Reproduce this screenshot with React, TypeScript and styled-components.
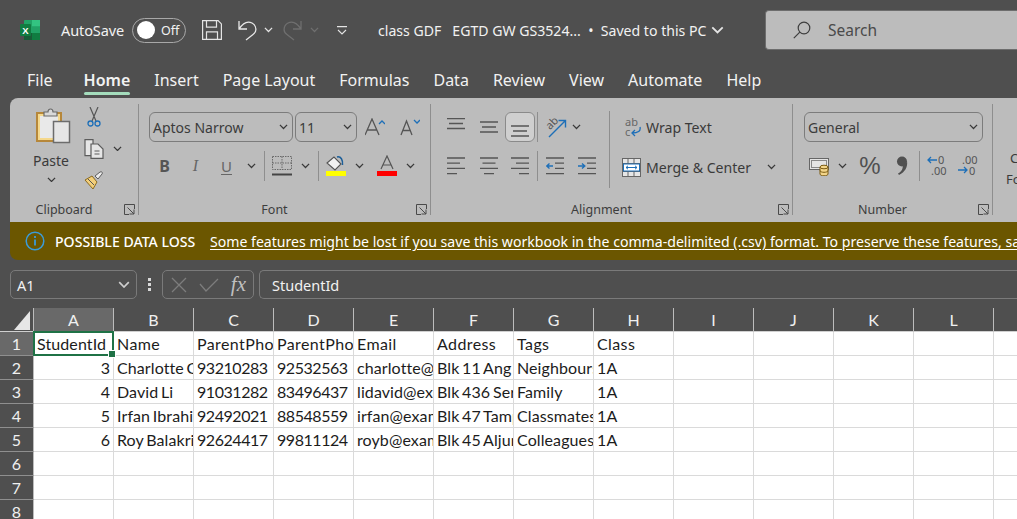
import styled, { createGlobalStyle } from "styled-components";

const UI_FONT = `"Noto Sans", "Open Sans", sans-serif`;
const CELL_FONT = `"Lato", "Noto Sans", sans-serif`;

const GlobalStyle = createGlobalStyle`
  html, body {
    margin: 0;
    width: 1017px;
    height: 519px;
    overflow: hidden;
    background: #4f4f4f;
    font-family: ${UI_FONT};
  }
  * { box-sizing: border-box; }
  svg { flex-shrink: 0; }
`;

const Page = styled.div`
  width: 1017px;
  height: 519px;
  overflow: hidden;
  background: #4f4f4f;
  color: #f2f2f2;
`;

/* title bar */
const TitleBar = styled.div`
  display: flex;
  align-items: center;
  height: 62px;
  padding: 0 0 2px 20px;
  font-size: 14px;
`;

const Spot = styled.div<{ $w: number }>`
  width: ${(p) => p.$w}px;
  flex: none;
  display: flex;
  align-items: center;
  justify-content: center;
`;

const AutoSave = styled.span`
  margin-left: 21px;
  width: 71px;
  flex: none;
  font-size: 14.5px;
  letter-spacing: -0.1px;
`;

const Toggle = styled.div`
  width: 54px;
  height: 25px;
  flex: none;
  border: 1px solid #a8a8a8;
  border-radius: 13px;
  display: flex;
  align-items: center;
  padding-left: 4px;
  gap: 6px;
  font-size: 12.5px;
`;

const Knob = styled.span`
  width: 18px;
  height: 18px;
  border-radius: 50%;
  background: #fff;
`;

const DocTitle = styled.div`
  margin-left: 31px;
  width: 387px;
  flex: none;
  display: flex;
  align-items: center;
  gap: 5px;
  font-size: 14.1px;
  white-space: pre;
`;

const SearchBox = styled.div`
  flex: 1;
  height: 40px;
  background: #bcbcbc;
  border: 1px solid #6d6d6d;
  border-right: none;
  border-radius: 4px 0 0 4px;
  display: flex;
  align-items: center;
  padding-left: 27px;
  gap: 17px;
  color: #4a4a4a;
  font-size: 15.5px;
`;

/* tabs */
const TabRow = styled.nav`
  display: flex;
  height: 36px;
  padding-left: 27px;
  gap: 24px;
  font-size: 16px;
`;

const Tab = styled.div<{ $active?: boolean; $first?: boolean }>`
  position: relative;
  padding-top: 6px;
  line-height: 24px;
  margin-right: ${(p) => (p.$first ? 7 : 0)}px;
  font-weight: ${(p) => (p.$active ? 600 : 400)};
  ${(p) =>
    p.$active &&
    `&::after {
      content: "";
      position: absolute;
      left: 0;
      right: 0;
      top: 30px;
      height: 3px;
      border-radius: 2px;
      background: #a4dcbc;
    }`}
`;

/* ribbon */
const Ribbon = styled.div`
  margin-left: 10px;
  height: 124px;
  display: flex;
  overflow: hidden;
  background: #bcbcbc;
  border-radius: 8px 0 0 0;
  color: #3a3a3a;
  font-size: 13px;
`;

const Group = styled.section<{ $w: number; $pad: number }>`
  --pad: ${(p) => p.$pad}px;
  width: ${(p) => p.$w}px;
  flex: none;
  height: 111px;
  margin-top: 6px;
  padding: 8px 0 0 var(--pad);
  border-right: 1px solid #8e8e8e;
  display: flex;
  flex-direction: column;
`;

const GroupBody = styled.div`
  display: flex;
  height: 70px;
`;

const GroupFooter = styled.div`
  position: relative;
  margin-top: auto;
  margin-left: calc(var(--pad) * -1);
  height: 12px;
  padding-right: 20px;
  display: flex;
  align-items: center;
  justify-content: center;
  font-size: 12.5px;
  color: #3d3d3d;
  & > svg {
    position: absolute;
    right: 3px;
    top: 1px;
  }
`;

const Rows = styled.div`
  display: flex;
  flex-direction: column;
  gap: 8px;
`;

const ToolRow = styled.div<{ $h?: number }>`
  display: flex;
  align-items: center;
  height: ${(p) => p.$h ?? 30}px;
`;

const Tool = styled.div<{ $w: number; $on?: boolean }>`
  width: ${(p) => p.$w}px;
  height: 30px;
  flex: none;
  display: flex;
  align-items: center;
  justify-content: center;
  ${(p) =>
    p.$on &&
    `background: #cfcfcf; border: 1px solid #8a8a8a; border-radius: 6px;`}
`;

const Bar = styled.span`
  width: 1px;
  height: 30px;
  background: #8e8e8e;
`;

const Combo = styled.div<{ $w: number }>`
  width: ${(p) => p.$w}px;
  height: 30px;
  flex: none;
  border: 1px solid #7c7c7c;
  border-radius: 6px;
  display: flex;
  align-items: center;
  justify-content: space-between;
  padding: 0 4px 0 3px;
  font-size: 14px;
  color: #3b3b3b;
`;

const BoldLetter = styled.strong`
  color: #555;
  font-size: 16px;
`;

const ItalicLetter = styled.em`
  color: #666;
  font-size: 16px;
  font-family: "Liberation Serif", serif;
`;

const UnderLetter = styled.span`
  color: #666;
  font-size: 15px;
  text-decoration: underline;
  text-underline-offset: 2px;
`;

const PasteCol = styled.div`
  width: 62px;
  display: flex;
  flex-direction: column;
  align-items: center;
  margin-top: -4px;
  font-size: 14px;
  line-height: 18px;
  & > svg:first-child {
    margin-left: 5px;
  }
  & > span {
    margin-top: 6px;
  }
  & > svg:last-child {
    margin-top: 7px;
  }
`;

const ToolCol = styled.div`
  margin-top: -8px;
  display: flex;
  flex-direction: column;
  gap: 7px;
`;

const WideBlock = styled.div`
  width: 170px;
  flex: none;
  height: 77px;
  margin-top: -1px;
  padding-top: 1px;
  border-right: 1px solid #8e8e8e;
`;

const WrapCol = styled.div`
  display: flex;
  flex-direction: column;
  gap: 10px;
  padding-left: 12px;
`;

const WrapRow = styled.div`
  display: flex;
  align-items: center;
  height: 30px;
  gap: 5px;
  font-size: 14.1px;
  white-space: nowrap;
`;

const WrapLabel = styled.span`
  width: 106px;
`;

const CutOff = styled.div<{ $indent: number }>`
  padding-left: ${(p) => p.$indent}px;
  line-height: 21px;
  font-size: 13px;
  white-space: nowrap;
`;

const LastGroup = styled.section`
  flex: none;
  width: 90px;
  padding-top: 50px;
`;

/* message bar */
const MessageBar = styled.div`
  margin-left: 10px;
  height: 38px;
  display: flex;
  align-items: center;
  padding-left: 15px;
  overflow: hidden;
  white-space: nowrap;
  background: #6b5600;
  border-radius: 0 0 0 8px;
  color: #fff;
  font-size: 14.1px;
`;

const MessageTitle = styled.strong`
  margin-left: 10px;
  width: 155px;
  flex: none;
  font-weight: 500;
`;

const MessageLink = styled.span`
  text-decoration: underline;
  text-underline-offset: 2px;
`;

/* formula bar */
const FormulaBar = styled.div`
  display: flex;
  align-items: center;
  height: 29px;
  margin: 10px 0 9px 10px;
  font-size: 14.5px;
`;

const FrameBox = styled.div<{ $w?: number }>`
  height: 29px;
  ${(p) => (p.$w ? `width: ${p.$w}px; flex: none;` : "flex: 1;")}
  border: 1px solid #7a7a7a;
  display: flex;
  align-items: center;
  border-radius: 5px;
`;

const NameBox = styled(FrameBox)`
  justify-content: space-between;
  padding: 0 6px;
`;

const FormulaInput = styled(FrameBox)`
  margin-left: 5px;
  padding-left: 12px;
  border-right: none;
  border-radius: 5px 0 0 5px;
`;

const Dots = styled.div`
  width: 25px;
  flex: none;
  display: flex;
  flex-direction: column;
  align-items: center;
  gap: 2px;
  & > i {
    width: 3px;
    height: 3px;
    background: #d8d8d8;
  }
`;

const FxButtons = styled(FrameBox)`
  justify-content: space-between;
  padding: 0 7px 0 8px;
`;

const FxLabel = styled.i`
  font-family: "Liberation Serif", serif;
  font-size: 21px;
  color: #c0c0c0;
`;

/* sheet */
const Sheet = styled.div`
  display: grid;
  grid-template-columns: 34px repeat(13, 80px);
  grid-auto-rows: 24px;
  font-family: ${CELL_FONT};
  font-size: 16px;
  background: #fff;
`;

const Corner = styled.div`
  background: #4f4f4f;
  border-right: 1px solid #bcbcbc;
  border-bottom: 1px solid #d0d0d0;
  display: flex;
  align-items: flex-end;
  justify-content: flex-end;
  padding: 0 3px 1px 0;
`;

const ColHead = styled.div<{ $sel?: boolean }>`
  background: ${(p) => (p.$sel ? "#696969" : "#4f4f4f")};
  color: #f0f0f0;
  border-right: 1px solid #bcbcbc;
  border-bottom: 1px solid #d0d0d0;
  display: flex;
  align-items: center;
  justify-content: center;
`;

const RowHead = styled.div<{ $sel?: boolean }>`
  background: ${(p) => (p.$sel ? "#696969" : "#4f4f4f")};
  color: #f0f0f0;
  border-right: 1px solid #bcbcbc;
  border-bottom: 1px solid #8f8f8f;
  display: flex;
  align-items: center;
  justify-content: center;
`;

const Cell = styled.div<{ $right?: boolean; $spacing: number; $active?: boolean }>`
  position: relative;
  background: #fff;
  color: #1c1c1c;
  border-right: 1px solid #dadada;
  border-bottom: 1px solid #dadada;
  padding: 0 ${(p) => (p.$right ? 3 : 0)}px 0 3px;
  line-height: 24px;
  white-space: nowrap;
  overflow: ${(p) => (p.$active ? "visible" : "hidden")};
  text-align: ${(p) => (p.$right ? "right" : "left")};
  letter-spacing: ${(p) => p.$spacing}px;
  word-spacing: -1.5px;
  ${(p) =>
    p.$active &&
    `z-index: 2;
    &::after {
      content: "";
      position: absolute;
      inset: -1px;
      border: 2px solid #1f7246;
      pointer-events: none;
    }
    &::before {
      content: "";
      position: absolute;
      right: -3px;
      bottom: -3px;
      width: 6px;
      height: 6px;
      background: #1f7246;
      border: 1px solid #fff;
      z-index: 1;
    }`}
`;

/* icons */
const Chevron = ({ size = 9, color = "#3a3a3a" }: { size?: number; color?: string }) => (
  <svg width={size} height={size * 0.6} viewBox="0 0 10 6" fill="none" stroke={color} strokeWidth="1.4">
    <path d="M1 1l4 4 4-4" />
  </svg>
);

const Launcher = () => (
  <svg width="11" height="11" viewBox="0 0 11 11" fill="none" stroke="#4a4a4a" strokeWidth="1">
    <path d="M10.5 5V.5H.5v10H5M3.5 3.5l6.5 6.5M10 5.5V10H5.5" />
  </svg>
);

const ExcelLogo = () => (
  <svg width="20" height="20" viewBox="0 0 20 20">
    <rect x="4" y="0" width="16" height="20" rx="1" fill="#21a366" />
    <rect x="12" y="0" width="8" height="6.5" fill="#33c481" />
    <rect x="12" y="6.5" width="8" height="6.5" fill="#21a366" />
    <rect x="12" y="13" width="8" height="7" fill="#107c41" />
    <rect x="4" y="13" width="8" height="7" fill="#185c37" />
    <rect x="0" y="4" width="11" height="12" rx="1" fill="#107c41" />
    <text x="5.5" y="13.6" fontSize="9.5" fontWeight="700" fill="#fff" textAnchor="middle" fontFamily="Liberation Sans, sans-serif">X</text>
  </svg>
);

const SaveIcon = () => (
  <svg width="20" height="20" viewBox="0 0 20 20" fill="none" stroke="#e4e4e4" strokeWidth="1.2">
    <path d="M.6.6h15.5l3.3 3.3v15.5H.6zM4.5.6v6.6h10V.6M4.5 19.4v-7.6h11v7.6" />
  </svg>
);

const UndoIcon = () => (
  <svg width="19" height="22" viewBox="0 0 19 22" fill="none" stroke="#e8e8e8" strokeWidth="1.3">
    <path d="M1 2v8h8M1 10c4-6 9-8 13-6 5 3 5 9 1 11.5L8 21" />
  </svg>
);

const RedoIcon = () => (
  <svg width="19" height="22" viewBox="0 0 19 22" fill="none" stroke="#6f6f6f" strokeWidth="1.3">
    <path d="M18 2v8h-8M18 10c-4-6-9-8-13-6-5 3-5 9-1 11.5l7 5.5" />
  </svg>
);

const QatIcon = () => (
  <svg width="10" height="9" viewBox="0 0 10 9" fill="none" stroke="#e4e4e4" strokeWidth="1.1">
    <path d="M0 .6h10M1 4l4 4 4-4" />
  </svg>
);

const SearchIcon = () => (
  <svg width="18" height="18" viewBox="0 0 18 18" fill="none" stroke="#3e3e3e" strokeWidth="1.2">
    <circle cx="11" cy="7" r="5.8" />
    <path d="M6.8 11.2l-6 6" />
  </svg>
);

const InfoIcon = () => (
  <svg width="20" height="20" viewBox="0 0 20 20" fill="none" stroke="#3b9bd8" strokeWidth="1.5">
    <circle cx="10" cy="10" r="8.8" />
    <path d="M10 8.5v6M10 5v2" strokeWidth="1.8" />
  </svg>
);

const ClipboardIcon = () => (
  <svg width="35" height="38" viewBox="0 0 35 38" fill="none">
    <rect x="1" y="5" width="24" height="28" fill="#f5d88c" stroke="#b6873a" strokeWidth="2" />
    <rect x="4" y="8" width="18" height="22" fill="#e9e9e9" />
    <path d="M8 8V4h4c0-4 5-4 5 0h4v4z" fill="#d9d9d9" stroke="#6a6a6a" strokeWidth="1.2" />
    <rect x="17.5" y="13.5" width="16" height="21" fill="#e6e6e6" stroke="#6c6c6c" strokeWidth="1.5" />
  </svg>
);

const ScissorsIcon = () => (
  <svg width="14" height="20" viewBox="0 0 14 20" fill="none">
    <path d="M3 0l6 14M11 0L5 14" stroke="#555" strokeWidth="1.2" />
    <circle cx="3.5" cy="16.5" r="2.5" stroke="#1d6fb8" strokeWidth="1.3" />
    <circle cx="10.5" cy="16.5" r="2.5" stroke="#1d6fb8" strokeWidth="1.3" />
  </svg>
);

const CopyIcon = () => (
  <svg width="20" height="20" viewBox="0 0 20 20" fill="#e6e6e6" stroke="#5c5c5c" strokeWidth="1.2">
    <path d="M1 .6h8v16H1z" />
    <path d="M7 5h7l5 5v9.4H7z" />
    <path d="M10.5 12h5M10.5 15h5" fill="none" />
  </svg>
);

const BrushIcon = () => (
  <svg width="20" height="19" viewBox="0 0 20 19" fill="none">
    <path d="M1 9l7-4 5 6-4 7z" fill="#f3cf7a" stroke="#8a6a20" strokeWidth="1" />
    <path d="M4 8l6 6" stroke="#555" strokeWidth="1" />
    <path d="M11 5l5-4c2-1 3 1 2 2l-4 5z" fill="#ececec" stroke="#5c5c5c" strokeWidth="1" />
  </svg>
);

const VerticalAlign = ({ top }: { top: number }) => (
  <svg width="18" height="19" viewBox="0 0 18 19" stroke="#555" strokeWidth="1.3">
    <line x1="0" x2="18" y1={top} y2={top} />
    <line x1="2" x2="16" y1={top + 5} y2={top + 5} />
    <line x1="0" x2="18" y1={top + 10} y2={top + 10} />
  </svg>
);

const AlignText = ({ dir }: { dir: "left" | "center" | "right" }) => {
  const rows = [18, 13, 18, 10];
  return (
    <svg width="18" height="18" viewBox="0 0 18 18" stroke="#555" strokeWidth="1.3">
      {rows.map((w, i) => {
        const x = dir === "left" ? 0 : dir === "right" ? 18 - w : (18 - w) / 2;
        return <line key={i} x1={x} x2={x + w} y1={1 + i * 5.2} y2={1 + i * 5.2} />;
      })}
    </svg>
  );
};

const IndentIcon = ({ more }: { more?: boolean }) => (
  <svg width="18" height="18" viewBox="0 0 18 18" fill="none">
    <path d="M0 1h18M9 6.2h9M9 11.4h9M0 16.6h18" stroke="#555" strokeWidth="1.3" />
    <path
      d={more ? "M0 9h6.5M4 6.5L6.8 9 4 11.5" : "M7 9H.5M3.5 6.5L.7 9l2.8 2.5"}
      stroke="#1d6fb8"
      strokeWidth="1.4"
    />
  </svg>
);

const OrientIcon = () => (
  <svg width="22" height="22" viewBox="0 0 22 22" fill="none">
    <text x="1" y="11" fontSize="11" fill="#555" transform="rotate(-45 7 8)" fontFamily="Noto Sans, sans-serif">ab</text>
    <path d="M4 21L20 5M13.5 4.5h7v7" stroke="#1d6fb8" strokeWidth="1.4" />
  </svg>
);

const BordersIcon = () => (
  <svg width="20" height="20" viewBox="0 0 20 20" fill="none" stroke="#6a6a6a" strokeWidth="1" strokeDasharray="1.5 1">
    <path d="M.5.5h19v13H.5zM10 .5v13M.5 7h19" />
    <path d="M0 18.5h20" strokeDasharray="none" strokeWidth="2" stroke="#444" />
  </svg>
);

const FillIcon = () => (
  <svg width="20" height="22" viewBox="0 0 20 22" fill="none">
    <path d="M1 8l7-6 7 7-6 6z" fill="#f1f1f1" stroke="#555" strokeWidth="1.1" />
    <path d="M11 2c4-1 6 3 5.5 8" stroke="#1d5f99" strokeWidth="1.5" />
    <rect x="0" y="16" width="20" height="5" fill="#ffff00" />
  </svg>
);

const FontColorIcon = () => (
  <svg width="20" height="22" viewBox="0 0 20 22" fill="none">
    <path d="M4 14L10 1l6 13M6 10h8" stroke="#555" strokeWidth="1.2" />
    <rect x="0" y="16" width="20" height="5" fill="#ff0000" />
  </svg>
);

const SizeIcon = ({ up }: { up?: boolean }) => (
  <svg width="20" height="18" viewBox="0 0 20 18" fill="none">
    <path d={up ? "M0 17L7 1l7 16M2.5 12h9" : "M1 17L6.5 3 12 17M3 12.5h7"} stroke="#555" strokeWidth="1.3" />
    <path d={up ? "M14 6l3-3 3 3" : "M14 2l3 3 3-3"} stroke="#1d6fb8" strokeWidth="1.3" />
  </svg>
);

const WrapIcon = () => (
  <svg width="19" height="20" viewBox="0 0 19 20" fill="none">
    <text x="3" y="9" fontSize="11" fill="#666" fontFamily="Noto Sans, sans-serif">ab</text>
    <text x="3" y="19" fontSize="11" fill="#666" fontFamily="Noto Sans, sans-serif">c</text>
    <path d="M18 10c1 4-2 6-8 6M13 13l-3 3 3 3" stroke="#1d6fb8" strokeWidth="1.3" />
  </svg>
);

const MergeIcon = () => (
  <svg width="19" height="19" viewBox="0 0 19 19" fill="none">
    <rect x=".5" y=".5" width="18" height="18" fill="#e6e6e6" stroke="#666" />
    <path d="M.5 5.5h18M.5 13.5h18M6 .5v5M12 .5v5M6 13.5v5M12 13.5v5" stroke="#666" />
    <rect x="1.5" y="6" width="16" height="7" fill="#fff" stroke="#1d6fb8" />
    <path d="M4 9.5h11M6 7.8L4 9.5l2 1.7M13 7.8l2 1.7-2 1.7" stroke="#1d6fb8" />
  </svg>
);

const CurrencyIcon = () => (
  <svg width="21" height="19" viewBox="0 0 21 19" fill="none">
    <rect x=".5" y="1.5" width="19" height="11" fill="#e4e4e4" stroke="#666" />
    <rect x="2.5" y="3.5" width="15" height="7" stroke="#888" />
    <path d="M11 10v7c0 2.400 8 2.400 8 0v-7M11 13.5c0 2.400 8 2.400 8 0" fill="#f3d58a" stroke="#7a5a10" />
    <ellipse cx="15" cy="10" rx="4" ry="1.8" fill="#f3d58a" stroke="#7a5a10" />
  </svg>
);

const CommaIcon = () => (
  <svg width="12" height="20" viewBox="0 0 12 20" fill="#505050">
    <circle cx="6" cy="5.5" r="5" />
    <path d="M7 8c3 0 4-1 4-3 1 6-2 11-8 14l-1-1.500c4-2 5-5 5-9.500z" />
  </svg>
);

const PercentLabel = styled.span`
  font-family: "Liberation Sans", sans-serif;
  font-size: 24px;
  color: #505050;
`;

const DecimalIcon = ({ more }: { more?: boolean }) => (
  <svg width="20" height="22" viewBox="0 0 20 22" fill="none">
    <text x={more ? 4 : 11} y="9" fontSize="11" fill="#555" fontFamily="Noto Sans, sans-serif">{more ? ".00" : "0"}</text>
    <text x={more ? 11 : 4} y="20" fontSize="11" fill="#555" fontFamily="Noto Sans, sans-serif">{more ? "0" : ".00"}</text>
    <path d={more ? "M0 15h9M6 12l3 3-3 3" : "M10 5H1M4 2L1 5l3 3"} stroke="#1d6fb8" strokeWidth="1.3" />
  </svg>
);

const CrossIcon = () => (
  <svg width="16" height="16" viewBox="0 0 16 16" stroke="#7d7d7d" strokeWidth="1.3">
    <path d="M1 1l14 14M15 1L1 15" />
  </svg>
);

const TickIcon = () => (
  <svg width="20" height="14" viewBox="0 0 20 14" fill="none" stroke="#7d7d7d" strokeWidth="1.3">
    <path d="M1 6l6 7L19 1" />
  </svg>
);

const CornerMark = () => (
  <svg width="16" height="19" viewBox="0 0 16 19">
    <path d="M16 0v19H0z" fill="#e6e6e6" />
  </svg>
);

const tabs = ["File", "Home", "Insert", "Page Layout", "Formulas", "Data", "Review", "View", "Automate", "Help"];
const columns = ["A", "B", "C", "D", "E", "F", "G", "H", "I", "J", "K", "L", "M"];

const records: (string | number)[][] = [
  ["StudentId", "Name", "ParentPhone", "ParentPhone", "Email", "Address", "Tags", "Class"],
  [3, "Charlotte Oliveiro", 93210283, 92532563, "charlotte@example.com", "Blk 11 Ang Mo Kio", "Neighbours", "1A"],
  [4, "David Li", 91031282, 83496437, "lidavid@example.com", "Blk 436 Serangoon", "Family", "1A"],
  [5, "Irfan Ibrahim", 92492021, 88548559, "irfan@example.com", "Blk 47 Tampines", "Classmates", "1A"],
  [6, "Roy Balakrishnan", 92624417, 99811124, "royb@example.com", "Blk 45 Aljunied", "Colleagues", "1A"],
];

const MESSAGE =
  "Some features might be lost if you save this workbook in the comma-delimited (.csv) format. To preserve these features, save it in an Excel file format.";

// tracking that brings Lato closer to the widths of the sheet font
const spacingFor = (value: string | number | undefined, row: number, col: number) => {
  if (typeof value === "number") return col > 0 ? -0.45 : 0;
  return row === 0 && col > 0 ? 0.4 : 0.1;
};

function Row({ index }: { index: number }) {
  const values = records[index] ?? [];
  return (
    <>
      <RowHead $sel={index === 0}>{index + 1}</RowHead>
      {columns.map((c, i) => {
        const v = values[i];
        return (
          <Cell
            key={c}
            $right={typeof v === "number" && i === 0}
            $spacing={spacingFor(v, index, i)}
            $active={index === 0 && i === 0}
          >
            {v}
          </Cell>
        );
      })}
    </>
  );
}

export default function App() {
  return (
    <Page>
      <GlobalStyle />
      <TitleBar>
        <ExcelLogo />
        <AutoSave>AutoSave</AutoSave>
        <Toggle>
          <Knob />
          Off
        </Toggle>
        <Spot $w={16} />
        <SaveIcon />
        <Spot $w={16} />
        <UndoIcon />
        <Spot $w={23}>
          <Chevron color="#e4e4e4" />
        </Spot>
        <Spot $w={3} />
        <RedoIcon />
        <Spot $w={24}>
          <Chevron color="#6f6f6f" />
        </Spot>
        <Spot $w={11} />
        <QatIcon />
        <DocTitle>
          class GDF   EGTD GW GS3524...  •  Saved to this PC
          <Chevron size={13} color="#e4e4e4" />
        </DocTitle>
        <SearchBox>
          <SearchIcon />
          Search
        </SearchBox>
      </TitleBar>

      <TabRow>
        {tabs.map((t) => (
          <Tab key={t} $active={t === "Home"} $first={t === "File"}>
            {t}
          </Tab>
        ))}
      </TabRow>

      <Ribbon>
        <Group $w={129} $pad={10}>
          <GroupBody>
            <PasteCol>
              <ClipboardIcon />
              <span>Paste</span>
              <Chevron />
            </PasteCol>
            <ToolCol>
              <ToolRow $h={25}>
                <Tool $w={24}>
                  <ScissorsIcon />
                </Tool>
              </ToolRow>
              <ToolRow $h={25}>
                <Tool $w={24}>
                  <CopyIcon />
                </Tool>
                <Tool $w={22}>
                  <Chevron />
                </Tool>
              </ToolRow>
              <ToolRow $h={25}>
                <Tool $w={24}>
                  <BrushIcon />
                </Tool>
              </ToolRow>
            </ToolCol>
          </GroupBody>
          <GroupFooter>
            <span>Clipboard</span>
            <Launcher />
          </GroupFooter>
        </Group>

        <Group $w={292} $pad={10}>
          <Rows>
            <ToolRow>
              <Combo $w={144}>
                Aptos Narrow
                <Chevron />
              </Combo>
              <Spot $w={2} />
              <Combo $w={62}>
                11
                <Chevron />
              </Combo>
              <Tool $w={36}>
                <SizeIcon up />
              </Tool>
              <Tool $w={34}>
                <SizeIcon />
              </Tool>
            </ToolRow>
            <ToolRow $h={32}>
              <Tool $w={31}>
                <BoldLetter>B</BoldLetter>
              </Tool>
              <Tool $w={31}>
                <ItalicLetter>I</ItalicLetter>
              </Tool>
              <Tool $w={31}>
                <UnderLetter>U</UnderLetter>
              </Tool>
              <Tool $w={18}>
                <Chevron />
              </Tool>
              <Tool $w={8}>
                <Bar />
              </Tool>
              <Tool $w={28}>
                <BordersIcon />
              </Tool>
              <Tool $w={18}>
                <Chevron />
              </Tool>
              <Tool $w={8}>
                <Bar />
              </Tool>
              <Tool $w={28}>
                <FillIcon />
              </Tool>
              <Tool $w={18}>
                <Chevron />
              </Tool>
              <Tool $w={38}>
                <FontColorIcon />
              </Tool>
              <Tool $w={8}>
                <Chevron />
              </Tool>
            </ToolRow>
          </Rows>
          <GroupFooter>
            <span>Font</span>
            <Launcher />
          </GroupFooter>
        </Group>

        <Group $w={362} $pad={9}>
          <GroupBody>
            <WideBlock>
              <Rows>
                <ToolRow>
                  <Tool $w={32}>
                    <VerticalAlign top={0.5} />
                  </Tool>
                  <Tool $w={33}>
                    <VerticalAlign top={4} />
                  </Tool>
                  <Tool $w={30} $on>
                    <VerticalAlign top={8} />
                  </Tool>
                  <Tool $w={4}>
                    <Bar />
                  </Tool>
                  <Tool $w={33}>
                    <OrientIcon />
                  </Tool>
                  <Tool $w={8}>
                    <Chevron />
                  </Tool>
                </ToolRow>
                <ToolRow $h={32}>
                  <Tool $w={32}>
                    <AlignText dir="left" />
                  </Tool>
                  <Tool $w={33}>
                    <AlignText dir="center" />
                  </Tool>
                  <Tool $w={30}>
                    <AlignText dir="right" />
                  </Tool>
                  <Tool $w={4}>
                    <Bar />
                  </Tool>
                  <Tool $w={32}>
                    <IndentIcon />
                  </Tool>
                  <Tool $w={32}>
                    <IndentIcon more />
                  </Tool>
                </ToolRow>
              </Rows>
            </WideBlock>
            <WrapCol>
              <WrapRow>
                <WrapIcon />
                <WrapLabel>Wrap Text</WrapLabel>
              </WrapRow>
              <WrapRow>
                <MergeIcon />
                <WrapLabel>Merge &amp; Center</WrapLabel>
                <Spot $w={28}>
                  <Chevron />
                </Spot>
              </WrapRow>
            </WrapCol>
          </GroupBody>
          <GroupFooter>
            <span>Alignment</span>
            <Launcher />
          </GroupFooter>
        </Group>

        <Group $w={200} $pad={11}>
          <Rows>
            <ToolRow>
              <Combo $w={179}>
                General
                <Chevron />
              </Combo>
            </ToolRow>
            <ToolRow $h={32}>
              <Tool $w={30}>
                <CurrencyIcon />
              </Tool>
              <Tool $w={16}>
                <Chevron />
              </Tool>
              <Tool $w={40}>
                <PercentLabel>%</PercentLabel>
              </Tool>
              <Tool $w={24}>
                <CommaIcon />
              </Tool>
              <Tool $w={10}>
                <Bar />
              </Tool>
              <Tool $w={26}>
                <DecimalIcon />
              </Tool>
              <Tool $w={36}>
                <DecimalIcon more />
              </Tool>
            </ToolRow>
          </Rows>
          <GroupFooter>
            <span>Number</span>
            <Launcher />
          </GroupFooter>
        </Group>

        <LastGroup>
          <CutOff $indent={17}>Conditional</CutOff>
          <CutOff $indent={13}>Formatting</CutOff>
        </LastGroup>
      </Ribbon>

      <MessageBar>
        <InfoIcon />
        <MessageTitle>POSSIBLE DATA LOSS</MessageTitle>
        <MessageLink>{MESSAGE}</MessageLink>
      </MessageBar>

      <FormulaBar>
        <NameBox $w={127}>
          A1
          <Chevron size={12} color="#cfcfcf" />
        </NameBox>
        <Dots>
          <i />
          <i />
          <i />
        </Dots>
        <FxButtons $w={92}>
          <CrossIcon />
          <TickIcon />
          <FxLabel>fx</FxLabel>
        </FxButtons>
        <FormulaInput>StudentId</FormulaInput>
      </FormulaBar>

      <Sheet>
        <Corner>
          <CornerMark />
        </Corner>
        {columns.map((c) => (
          <ColHead key={c} $sel={c === "A"}>
            {c}
          </ColHead>
        ))}
        {Array.from({ length: 8 }, (_, r) => (
          <Row key={r} index={r} />
        ))}
      </Sheet>
    </Page>
  );
}
